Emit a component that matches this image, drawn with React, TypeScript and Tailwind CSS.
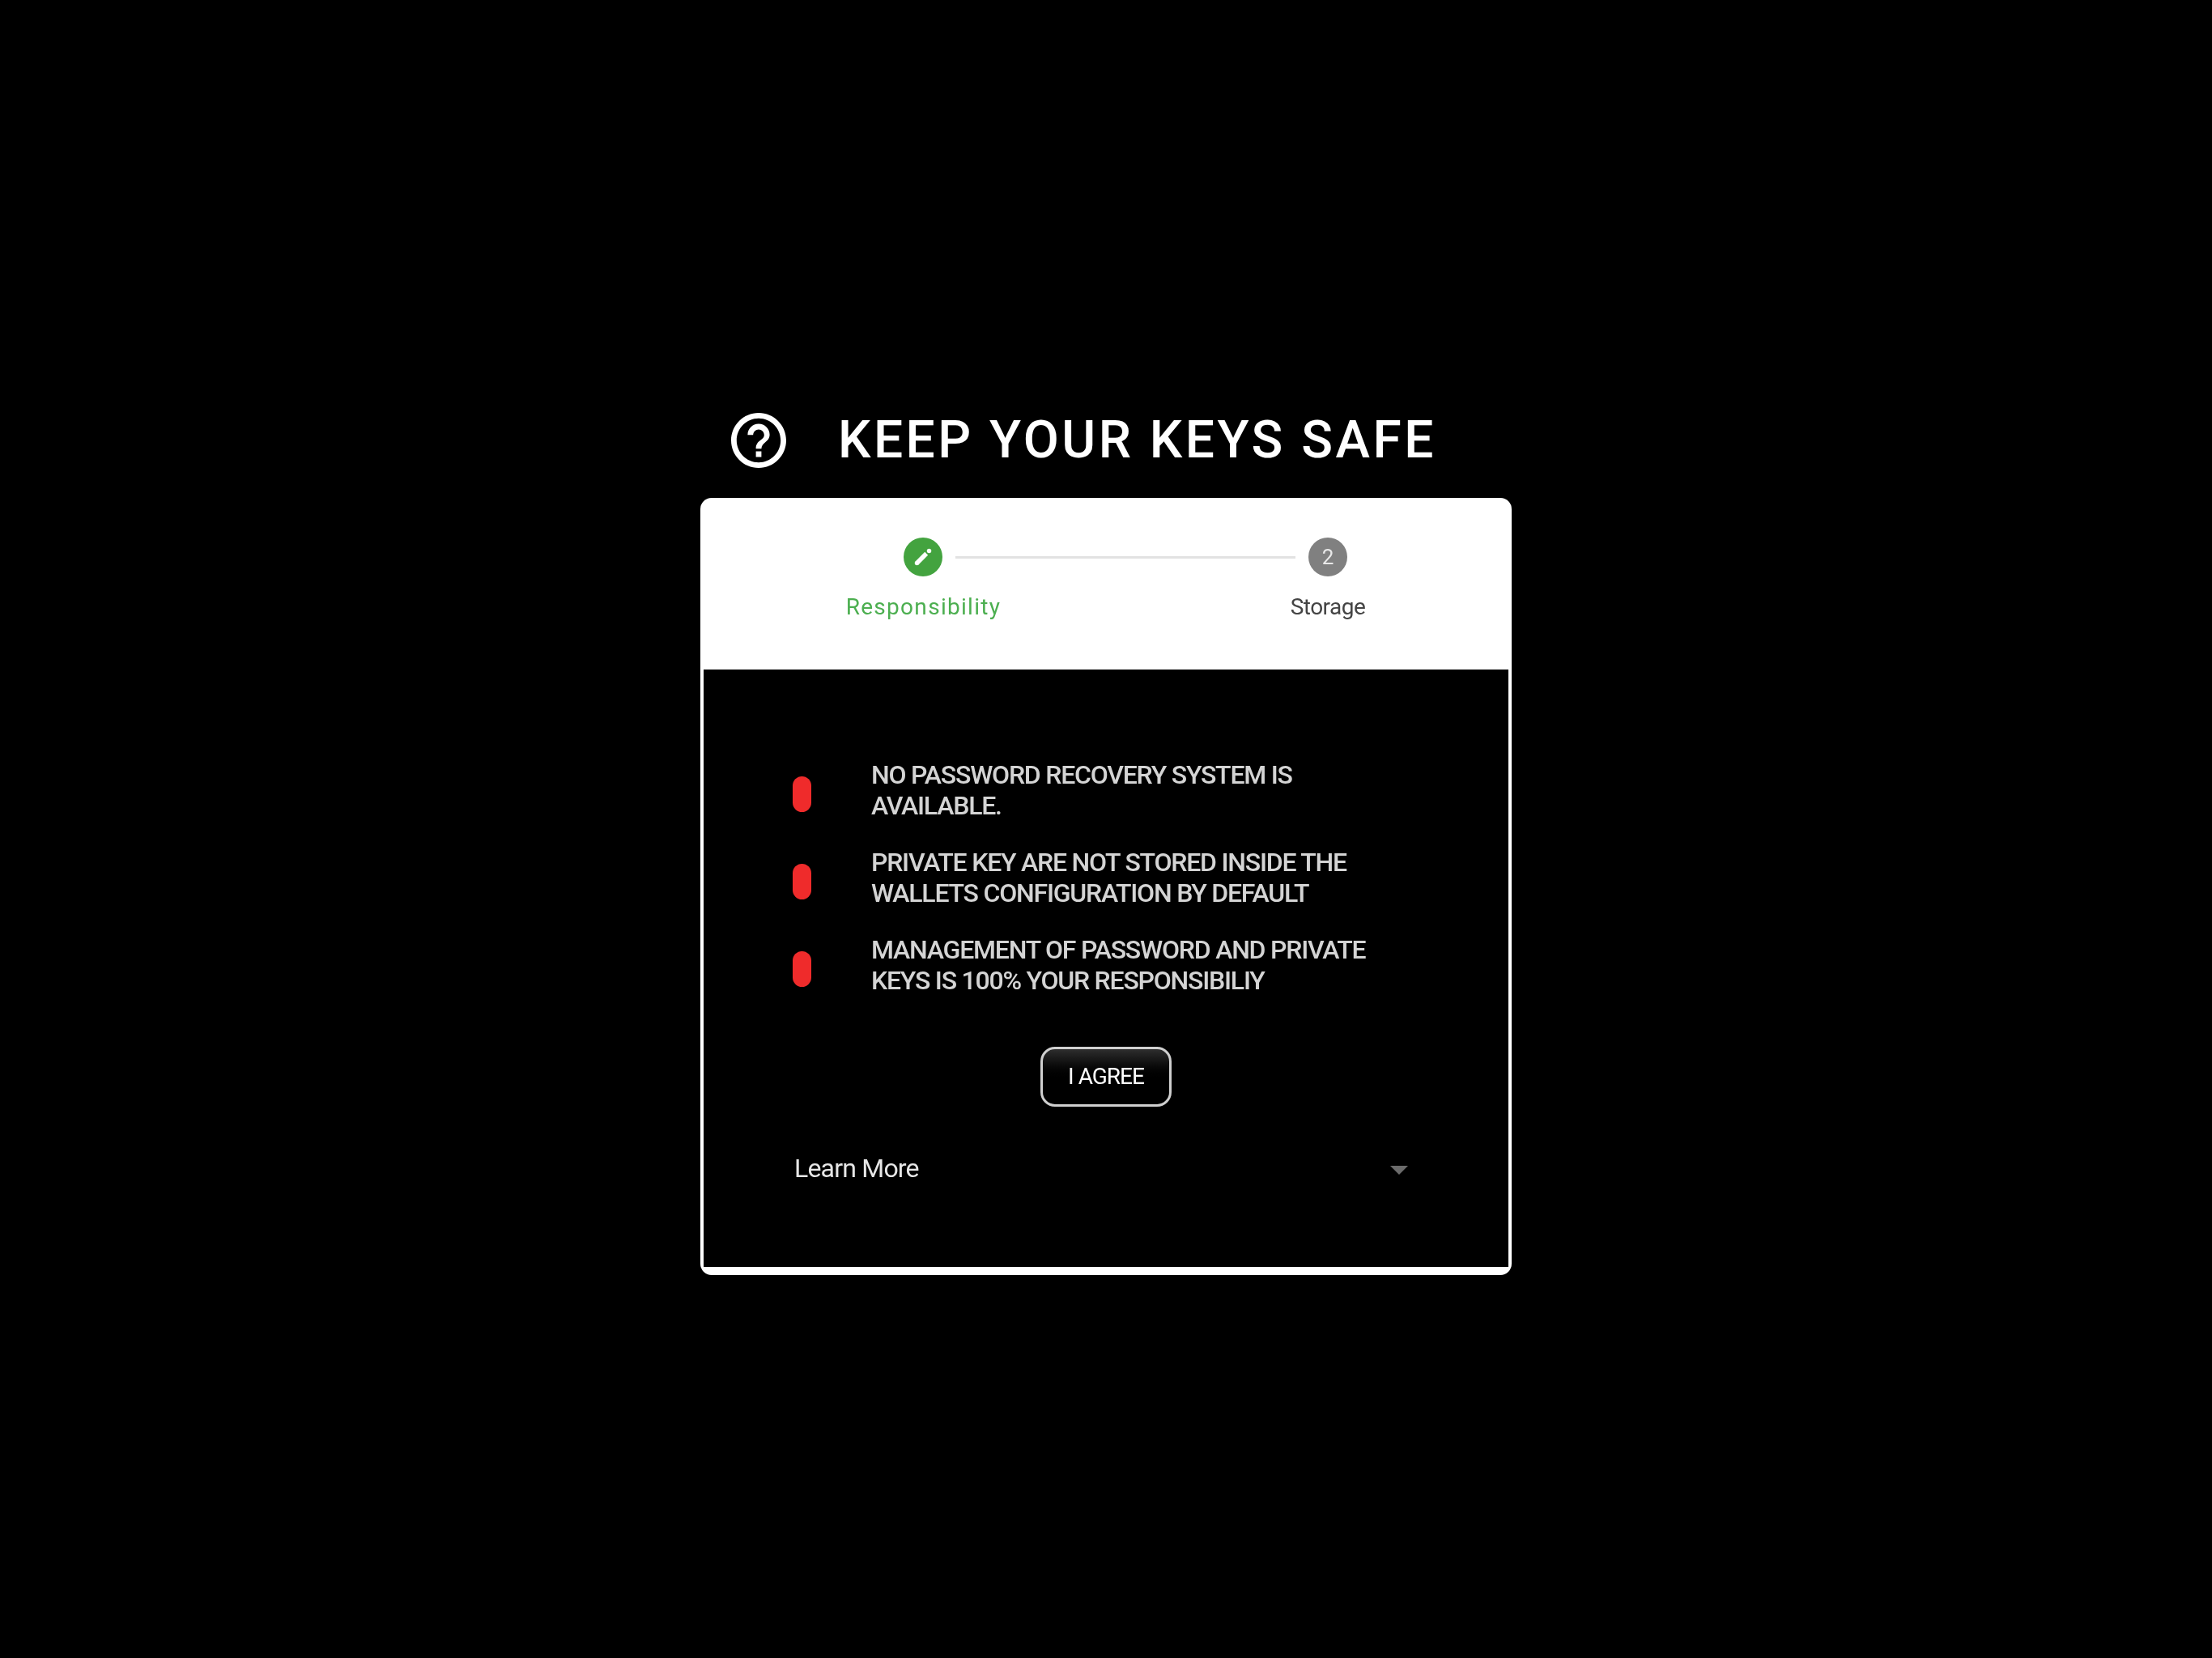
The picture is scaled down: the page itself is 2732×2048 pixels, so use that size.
const items = [
  ["NO PASSWORD RECOVERY SYSTEM IS", "AVAILABLE."],
  ["PRIVATE KEY ARE NOT STORED INSIDE THE", "WALLETS CONFIGURATION BY DEFAULT"],
  ["MANAGEMENT OF PASSWORD AND PRIVATE", "KEYS IS 100% YOUR RESPONSIBILIY"],
];

export default function App() {
  return (
    <div className="min-h-[2048px] w-full bg-black flex flex-col items-center pt-[510px] font-['Roboto',sans-serif] blur-[0.6px]">
      <div className="w-[1002px] h-[105px] flex items-start pl-[38px] gap-[64px]">
        <svg width="68" height="68" viewBox="2 2 20 20" fill="#fff" className="shrink-0">
          <path d="M11 18h2v-2h-2v2zm1-16C6.480 2 2 6.480 2 12s4.480 10 10 10 10-4.480 10-10S17.520 2 12 2zm0 18c-4.410 0-8-3.590-8-8s3.590-8 8-8 8 3.590 8 8-3.590 8-8 8zm0-14c-2.210 0-4 1.790-4 4h2c0-1.100.900-2 2-2s2 .900 2 2c0 2-3 1.750-3 5h2c0-2.250 3-2.500 3-5 0-2.210-1.790-4-4-4z" />
        </svg>
        <h1 className="text-[64px] leading-[68px] font-medium text-white tracking-[3.500px] whitespace-nowrap">KEEP YOUR KEYS SAFE</h1>
      </div>
      <div className="w-[1002px] h-[960px] rounded-[14px] bg-white flex flex-col overflow-hidden">
        <div className="h-[212px] relative shrink-0 pt-[49px] pl-[251px]">
          <div className="flex items-center">
            <div className="w-[48px] h-[48px] rounded-full bg-[#43a33f] flex items-center justify-center shrink-0">
              <svg width="28" height="28" viewBox="0 0 28 28" fill="none">
                <path d="M6.500 21.500 L18.200 9.800" stroke="#fff" strokeWidth="5.500" />
                <circle cx="6.500" cy="21.500" r="2.750" fill="#fff" />
                <circle cx="21.500" cy="6.500" r="2.750" fill="#fff" />
              </svg>
            </div>
            <div className="w-[420px] h-[3px] bg-[#e2e2e2] mx-[16px]" />
            <div className="w-[48px] h-[48px] rounded-full bg-[#808080] flex items-center justify-center text-[26px] text-[#e8e8e8] shrink-0">2</div>
          </div>
          <div className="absolute left-[0px] top-[116px] w-[551px] text-center text-[28px] leading-[38px] tracking-[1.300px] text-[#4caf50]">Responsibility</div>
          <div className="absolute left-[552px] top-[116px] w-[446px] text-center text-[28px] leading-[38px] tracking-[-0.500px] text-[#444]">Storage</div>
        </div>
        <div className="flex-1 bg-black mx-[4px] mb-[10px] pt-[112px] px-[110px] flex flex-col">
          {items.map((lines, i) => (
            <div key={i} className="h-[108px] flex items-start">
              <div className="w-[23px] h-[44px] rounded-full bg-[#ef2b2b] mt-[20px] shrink-0" />
              <div className="ml-[74px] text-[32px] leading-[37.500px] font-medium text-[#d4d4d4] tracking-[-1.220px] whitespace-nowrap">
                {lines.map((l) => (<div key={l}>{l}</div>))}
              </div>
            </div>
          ))}
          <div className="flex justify-center mt-[30px]">
            <button className="w-[162px] h-[74px] rounded-[18px] border-[3px] border-[#cfcfcf] bg-gradient-to-b from-[#2e2e2e] to-black to-60% text-white text-[28px] tracking-[-1px]">I AGREE</button>
          </div>
          <div className="flex items-center justify-between mt-[56px] pr-[14px]">
            <span className="ml-[2px] text-[32px] leading-[40px] text-[#e6e6e6] tracking-[-0.800px]">Learn More</span>
            <span className="w-0 h-0 border-l-[11px] border-r-[11px] border-t-[11px] border-l-transparent border-r-transparent border-t-[#6b6b6b] mt-[4px]" />
          </div>
        </div>
      </div>
    </div>
  );
}
